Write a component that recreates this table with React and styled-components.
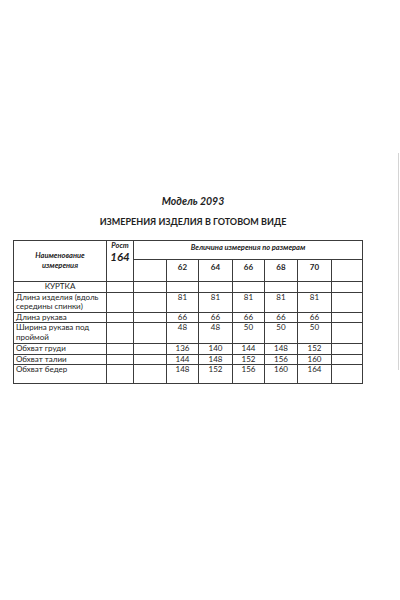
import React from "react";
import styled, { createGlobalStyle } from "styled-components";

const GlobalStyle = createGlobalStyle`
  html, body {
    margin: 0;
    padding: 0;
    background: #ffffff;
  }
  body {
    font-family: Lato, "Noto Sans", "Liberation Sans", sans-serif;
    color: #1e1e1e;
  }
`;

const Page = styled.div`
  display: flex;
  width: 400px;
  height: 600px;
  overflow: hidden;
`;

const Sheet = styled.div`
  width: 398px;
  display: flex;
  flex-direction: column;
  padding: 195px 0 0 13px;
  box-sizing: border-box;
`;

const Edge = styled.div`
  width: 1px;
  height: 217px;
  margin-top: 153px;
  background: #d4d4d4;
`;

const Titles = styled.div`
  width: 360px;
  display: flex;
  flex-direction: column;
  align-items: center;
  gap: 8px;
`;

const Model = styled.div`
  font-size: 10.5px;
  font-weight: 700;
  font-style: italic;
  line-height: 13px;
`;

const Heading = styled.div`
  font-size: 9px;
  font-weight: 700;
  line-height: 12px;
`;

const Table = styled.table`
  margin-top: 12px;
  width: 349px;
  table-layout: fixed;
  border-collapse: collapse;
  font-size: 8px;
  line-height: 9.5px;
`;

const Cell = styled.td`
  border: 1px solid #3c3c3c;
  padding: 0 2px;
  vertical-align: top;
  text-align: ${(p) => (p.$left ? "left" : "center")};
  height: ${(p) => p.$h}px;
  box-sizing: border-box;
  overflow: hidden;
  white-space: nowrap;
`;

const HeadCell = styled(Cell).attrs({ as: "th" })`
  font-weight: 700;
  font-style: ${(p) => (p.$italic ? "italic" : "normal")};
  vertical-align: ${(p) => (p.$middle ? "middle" : "top")};
  font-size: ${(p) => p.$size || 8}px;
  padding-top: ${(p) => p.$pt || 0}px;
  line-height: 10px;
`;

const Rost = styled.div`
  font-size: 7.5px;
  line-height: 9px;
`;

const RostValue = styled.div`
  font-size: 11.5px;
  line-height: 13px;
`;

const sizes = ["62", "64", "66", "68", "70"];
const widths = [93, 27, 33, 32, 34, 32, 33, 34, 31];

const rows = [
  { name: ["КУРТКА"], values: [], center: true, h: 10 },
  { name: ["Длина изделия (вдоль", "середины спинки)"], values: ["81", "81", "81", "81", "81"], h: 19 },
  { name: ["Длина рукава"], values: ["66", "66", "66", "66", "66"], h: 9 },
  { name: ["Ширина рукава под", "проймой"], values: ["48", "48", "50", "50", "50"], h: 21 },
  { name: ["Обхват груди"], values: ["136", "140", "144", "148", "152"], h: 10 },
  { name: ["Обхват талии"], values: ["144", "148", "152", "156", "160"], h: 9 },
  { name: ["Обхват бедер"], values: ["148", "152", "156", "160", "164"], h: 19 },
];

function App() {
  return (
    <Page>
      <GlobalStyle />
      <Sheet>
        <Titles>
          <Model>Модель 2093</Model>
          <Heading>ИЗМЕРЕНИЯ ИЗДЕЛИЯ В ГОТОВОМ ВИДЕ</Heading>
        </Titles>
        <Table>
          <colgroup>
            {widths.map((w, i) => (
              <col key={i} style={{ width: w }} />
            ))}
          </colgroup>
          <thead>
            <tr>
              <HeadCell rowSpan={2} $italic $middle $size={7.5}>
                Наименование
                <br />
                измерения
              </HeadCell>
              <HeadCell rowSpan={2} $italic>
                <Rost>Рост</Rost>
                <RostValue>164</RostValue>
              </HeadCell>
              <HeadCell colSpan={7} $italic $h={19} $size={7.5} $pt={2}>
                Величина измерения по размерам
              </HeadCell>
            </tr>
            <tr>
              <HeadCell $h={22} />
              {sizes.map((s) => (
                <HeadCell key={s} $h={22} $pt={2}>
                  {s}
                </HeadCell>
              ))}
              <HeadCell $h={22} />
            </tr>
          </thead>
          <tbody>
            {rows.map((r) => (
              <tr key={r.name[0]}>
                <Cell $left={!r.center} $h={r.h}>
                  {r.name.map((line, i) => (
                    <div key={i}>{line}</div>
                  ))}
                </Cell>
                <Cell $h={r.h} />
                <Cell $h={r.h} />
                {sizes.map((s, i) => (
                  <Cell key={s} $h={r.h}>
                    {r.values[i] || ""}
                  </Cell>
                ))}
                <Cell $h={r.h} />
              </tr>
            ))}
          </tbody>
        </Table>
      </Sheet>
      <Edge />
    </Page>
  );
}

export default App;
